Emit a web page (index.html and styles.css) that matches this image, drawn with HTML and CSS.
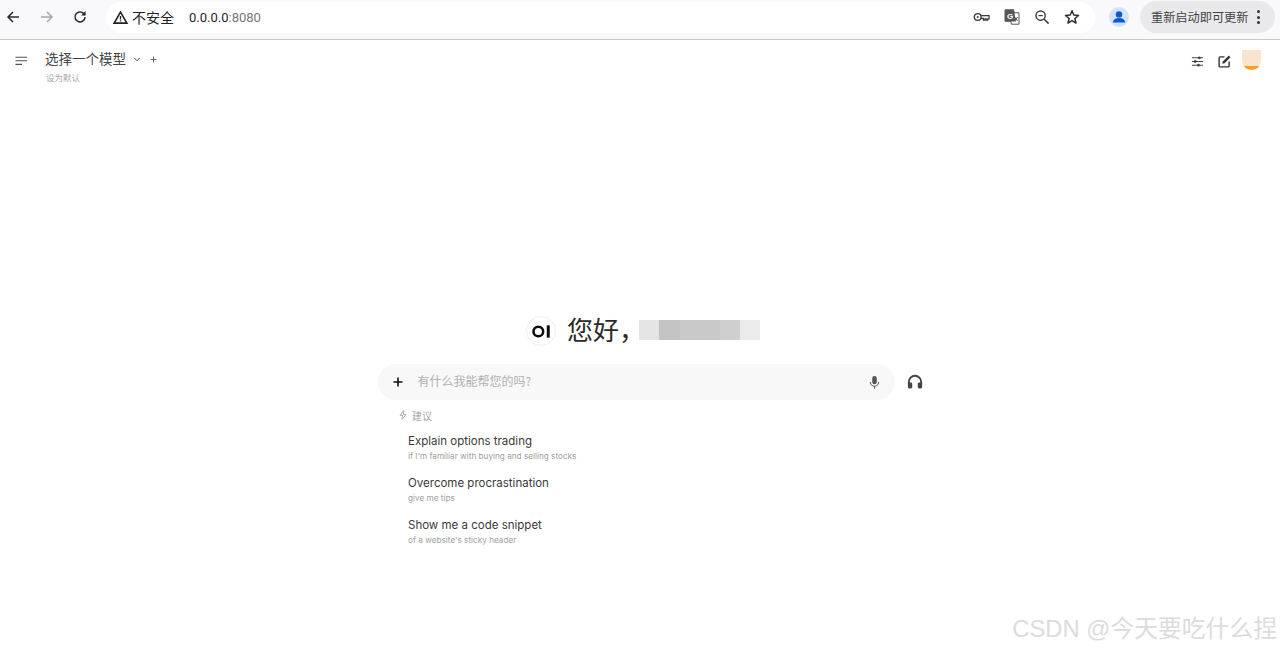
FILE: index.html
```html
<!DOCTYPE html>
<html lang="zh-CN">
<head>
<meta charset="utf-8">
<title>Open WebUI</title>
<link rel="stylesheet" href="styles.css">
</head>
<body>
<div class="toolbar">
  <div class="nav">
    <svg class="ic" viewBox="0 0 16 16"><path d="M14 8H3M8 3 3 8l5 5" fill="none" stroke="#2b2b2f" stroke-width="1.5"/></svg>
    <svg class="ic" viewBox="0 0 16 16"><path d="M2 8h11M8 3l5 5-5 5" fill="none" stroke="#a5a6aa" stroke-width="1.5"/></svg>
    <svg class="ic" viewBox="0 0 16 16"><path d="M13 8a5 5 0 1 1-1.5-3.6L13 6" fill="none" stroke="#2b2b2f" stroke-width="1.5"/><path d="M13.6 2v4.6H9z" fill="#2b2b2f"/></svg>
  </div>
  <div class="omnibox">
    <div class="secure">
      <svg class="warn" viewBox="0 0 16 16"><path d="M8 2.200 14.800 14H1.200Z" fill="none" stroke="#222" stroke-width="1.700"/><path d="M8 6.400v3.800M8 11v1.300" stroke="#222" stroke-width="1.400"/></svg>
      <span>不安全</span>
    </div>
    <div class="url">0.0.0.0<span class="port">:8080</span></div>
    <div class="omni-icons">
      <svg class="oi key" viewBox="0 0 18 12"><circle cx="5" cy="6" r="3.600" fill="none" stroke="#3c3c40" stroke-width="1.500"/><circle cx="5" cy="6" r="1" fill="#3c3c40"/><path d="M8.600 4.600h8.400v3.400h-1.400v1.400h-1.600V8h-1.400v1.400H11V7.400H8.600" fill="none" stroke="#3c3c40" stroke-width="1.300"/></svg>
      <svg class="oi" viewBox="0 0 16 16"><path d="M1 .8h8.600l.6 3H15v11.400H7.400l-.6-3H1z" fill="#fff" stroke="#55565a"/><path d="M1 .8h8.800l2.200 11.600H1z" fill="#55565a"/><text x="3" y="9.600" class="g-glyph">G</text><path d="M10.500 8l3 4M13.500 8l-3 4" stroke="#55565a" fill="none"/></svg>
      <svg class="oi" viewBox="0 0 16 16"><circle cx="6.600" cy="6.600" r="4.600" fill="none" stroke="#3c3c40" stroke-width="1.400"/><path d="M10 10l4.600 4.600" stroke="#3c3c40" stroke-width="1.600"/><path d="M4.400 6.600h4.400" stroke="#3c3c40" stroke-width="1.200"/></svg>
      <svg class="oi" viewBox="0 0 16 16"><path d="M8 1.800 9.800 6l4.700.4-3.600 3.100 1.100 4.600L8 11.700l-4 2.400 1.100-4.600L1.500 6.400 6.200 6Z" fill="none" stroke="#2b2b2f" stroke-width="1.500" stroke-linejoin="round"/></svg>
    </div>
  </div>
  <div class="avatar-chip">
    <svg viewBox="0 0 20 20"><circle cx="10" cy="10" r="10" fill="#d3e3fd"/><circle cx="10" cy="7.400" r="3.200" fill="#0b57d0"/><path d="M3.800 15.400c.4-3 3-4.400 6.200-4.400s5.800 1.400 6.200 4.400z" fill="#0b57d0"/></svg>
  </div>
  <div class="update">
    <span>重新启动即可更新</span>
    <span class="dots"><i></i><i></i><i></i></span>
  </div>
</div>

<div class="app">
  <header class="header">
    <svg class="menu" viewBox="0 0 14 10"><path d="M.5 1h12.500M.5 4.800h12.500M.5 8.600h7" fill="none" stroke="#505050" stroke-width="1.200"/></svg>
    <div class="model">
      <div class="model-row">
        <span class="model-name">选择一个模型</span>
        <svg class="chev" viewBox="0 0 10 6"><path d="M1.500 1 5 4.600 8.500 1" fill="none" stroke="#444" stroke-width="1.100"/></svg>
        <svg class="plus-s" viewBox="0 0 8 8"><path d="M4 .6v6.800M.6 4h6.800" stroke="#555" stroke-width="1"/></svg>
      </div>
      <div class="default">设为默认</div>
    </div>
    <div class="tools">
      <svg class="tool sliders" viewBox="0 0 14 14"><path d="M1 3h12M1 7h12M1 11h12" stroke="#444" stroke-width="1.200"/><circle cx="9" cy="3" r="1.500" fill="#444"/><circle cx="4.500" cy="7" r="1.500" fill="#444"/><circle cx="8" cy="11" r="1.500" fill="#444"/></svg>
      <svg class="tool" viewBox="0 0 14 14"><path d="M7 2H2.200A1 1 0 0 0 1.200 3v8.800a1 1 0 0 0 1 1H11a1 1 0 0 0 1-1V7" fill="none" stroke="#333" stroke-width="1.500"/><path d="M11.600.6 13.400 2.400 7 8.800l-2.400.6.600-2.400z" fill="#333"/></svg>
      <div class="user"><div class="user-fill"></div></div>
    </div>
  </header>

  <main class="main">
    <div class="hello">
      <div class="logo">
        <svg viewBox="0 0 18 12"><circle cx="6" cy="6" r="4.600" fill="none" stroke="#0b0b0b" stroke-width="2.400"/><rect x="14" y=".2" width="2.800" height="11.600" fill="#0b0b0b"/></svg>
      </div>
      <h1>您好，</h1>
      <div class="blur">
        <i class="b1"></i><i class="b2"></i><i class="b3"></i><i class="b4"></i><i class="b5"></i><i class="b6"></i>
      </div>
    </div>
    <div class="input-row">
      <div class="input">
        <svg class="add" viewBox="0 0 10 10"><path d="M5 .5v9M.5 5h9" stroke="#111" stroke-width="1.600"/></svg>
        <span class="placeholder">有什么我能帮您的吗?</span>
        <svg class="mic" viewBox="0 0 12 16"><rect x="3.500" y="1" width="5" height="9" rx="2.500" fill="#555"/><path d="M1.500 7.500a4.500 4.500 0 0 0 9 0M6 12v2.800" fill="none" stroke="#555" stroke-width="1.100"/></svg>
      </div>
      <svg class="phones" viewBox="0 0 16 16"><path d="M1.800 10V8a6.200 6.200 0 0 1 12.400 0v2" fill="none" stroke="#444" stroke-width="1.900"/><rect x=".9" y="8.400" width="4.300" height="6" rx="1.400" fill="#444"/><rect x="10.800" y="8.400" width="4.300" height="6" rx="1.400" fill="#444"/></svg>
    </div>
    <div class="suggest">
      <div class="suggest-head">
        <svg class="bolt" viewBox="0 0 8 10"><path d="M4.600.6 1 5.400h2.400L3 9.400 7 4.600H4.400Z" fill="none" stroke="#a8a8a8" stroke-width=".9"/></svg>
        <span>建议</span>
      </div>
      <div class="item"><div class="item-title">Explain options trading</div><div class="item-sub">if I'm familiar with buying and selling stocks</div></div>
      <div class="item"><div class="item-title">Overcome procrastination</div><div class="item-sub">give me tips</div></div>
      <div class="item"><div class="item-title">Show me a code snippet</div><div class="item-sub">of a website's sticky header</div></div>
    </div>
  </main>
</div>
<div class="watermark">CSDN @今天要吃什么捏</div>
</body>
</html>
```
FILE: styles.css
```css
* { box-sizing: border-box; }
html, body { margin: 0; height: 100%; overflow: hidden; background: #fff; }
body {
  font-family: Inter, "Noto Sans CJK SC", sans-serif;
  position: relative;
  color: #222;
}
.toolbar {
  height: 40px;
  display: flex;
  align-items: center;
  background: #f9f9fb;
  border-bottom: 1px solid #c9c9c9;
  padding-bottom: 5px;
}
.nav {
  display: flex;
  gap: 17.500px;
  padding-left: 5px;
  width: 106px;
}
.ic { width: 16px; height: 16px; }
.omnibox {
  width: 989px;
  height: 31px;
  background: #fff;
  border-radius: 16px;
  display: flex;
  align-items: center;
  padding-left: 7px;
}
.secure {
  display: flex;
  align-items: center;
  gap: 4px;
  font-size: 14px;
  font-family: "Noto Sans CJK SC", sans-serif;
  color: #1f1f1f;
  width: 76px;
}
.warn { width: 15px; height: 15px; }
.url { font-family: Roboto, sans-serif; font-size: 13px; color: #1f1f1f; }
.port { color: #777; }
.omni-icons {
  margin-left: auto;
  display: flex;
  gap: 14px;
  align-items: center;
  padding-right: 15px;
}
.oi { width: 16px; height: 16px; }
.key { width: 17px; height: 12px; }
.g-glyph { font-family: "Liberation Sans", sans-serif; font-size: 8px; font-weight: 700; fill: #fff; }
.avatar-chip { width: 45px; padding-left: 2px; display: flex; justify-content: center; }
.avatar-chip svg { width: 20px; height: 20px; }
.update {
  width: 135px;
  height: 32px;
  background: #e9e9eb;
  border-radius: 16px;
  display: flex;
  align-items: center;
  padding-left: 11px;
  font-size: 12.200px;
  font-family: "Noto Sans CJK SC", sans-serif;
  color: #444;
  gap: 8px;
}
.dots { display: flex; flex-direction: column; gap: 2.500px; }
.dots i { width: 3px; height: 3px; border-radius: 50%; background: #333; }

.app { display: flex; flex-direction: column; height: 610px; }
.header {
  display: flex;
  align-items: flex-start;
  padding: 9px 19px 0 15px;
  height: 40px;
}
.menu { width: 13px; height: 10px; margin-top: 7px; }
.model { margin-left: 17px; font-family: "Noto Sans CJK SC", sans-serif; }
.model-row { display: flex; align-items: center; height: 18px; }
.model-name { font-size: 13.500px; color: #444; line-height: 18px; }
.chev { width: 8px; height: 5px; margin-left: 7px; margin-top: 2px; }
.plus-s { width: 7px; height: 7px; margin-left: 9px; margin-top: 2px; }
.default { font-size: 8.500px; color: #aaa; margin: 4px 0 0 1px; line-height: 12px; }
.tools { margin-left: auto; display: flex; gap: 11px; align-items: flex-start; }
.tool { width: 13px; height: 13px; margin-top: 6px; }
.sliders { margin-right: 3px; }
.user {
  width: 19px;
  height: 20px;
  margin-top: 1px;
  background: #fae4cf;
  border-radius: 0 0 10px 10px;
  display: flex;
  align-items: flex-end;
  overflow: hidden;
}
.user-fill { width: 100%; height: 4px; background: #f5a21f; }

.main { display: flex; flex-direction: column; align-items: center; padding: 232px 0 0 22px; }
.hello { display: flex; align-items: center; height: 36px; width: 260px; margin-left: 10px; }
.logo {
  width: 30px;
  height: 30px;
  margin-top: 2px;
  border-radius: 50%;
  border: 1px solid #eeeeee;
  display: flex;
  align-items: center;
  justify-content: center;
}
.logo svg { width: 19px; height: 13px; }
h1 {
  margin: -2px 0 0 11px;
  font-family: "Noto Sans CJK SC", sans-serif;
  font-weight: 400;
  font-size: 26px;
  color: #2a2a2a;
  width: 72px;
  line-height: 36px;
  white-space: nowrap;
}
.blur { display: flex; height: 20px; margin-top: -1px; }
.blur i { display: block; height: 20px; }
.b1 { width: 20px; background: #e5e5e5; }
.b2 { width: 21px; background: #c4c4c4; }
.b3 { width: 20px; background: #c8c8c8; }
.b4 { width: 20px; background: #c8c8c8; }
.b5 { width: 20px; background: #cfcfcf; }
.b6 { width: 20px; background: #ebebeb; }

.input-row { display: flex; align-items: center; margin-top: 16px; width: 546px; }
.input {
  width: 517px;
  height: 36px;
  background: #f8f8f8;
  border-radius: 18px;
  display: flex;
  align-items: center;
  padding: 0 15px;
}
.add { width: 10px; height: 10px; }
.placeholder { margin: 0 0 4px 14.500px; font-size: 12px; color: #b0b0b0; font-family: "Noto Sans CJK SC", sans-serif; }
.mic { width: 11px; height: 15px; margin-left: auto; }
.phones { width: 16px; height: 16px; margin-left: 12px; }

.suggest { width: 546px; padding-left: 21px; }
.suggest-head {
  display: flex;
  align-items: center;
  gap: 5px;
  margin-top: 7px;
  height: 16px;
  font-size: 10px;
  color: #a8a8a8;
  font-family: "Noto Sans CJK SC", sans-serif;
}
.bolt { width: 8px; height: 10px; }
.item { margin: 0 0 0 9px; height: 42px; }
.suggest-head + .item { margin-top: 10px; }
.item-title { font-size: 11.500px; line-height: 16px; color: #3a3a3a; }
.item-sub { font-size: 8.200px; line-height: 14px; color: #a0a0a0; }
.watermark {
  position: absolute;
  right: 3px;
  bottom: 4px;
  font-family: "Liberation Sans", "Noto Sans CJK SC", sans-serif;
  font-size: 23.800px;
  line-height: 34px;
  color: #dcdcdc;
  white-space: nowrap;
}
```
